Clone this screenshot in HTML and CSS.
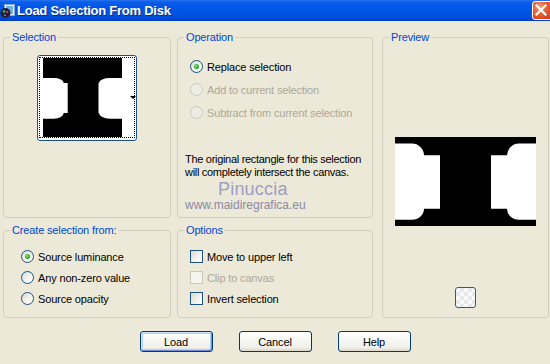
FILE: index.html
```html
<!DOCTYPE html>
<html>
<head>
<meta charset="utf-8">
<link rel="stylesheet" href="styles.css">
</head>
<body>
<div class="window">
  <div class="titlebar">
    <svg class="app-icon" width="16" height="16" viewBox="0 0 16 16">
      <rect x="4.5" y="1.5" width="10" height="11" fill="#E8F2FF" stroke="#8AA8D0"/>
      <rect x="6" y="3" width="7" height="8" fill="#6FB0E8"/>
      <circle cx="5.5" cy="10" r="5" fill="#2A1A30"/>
      <circle cx="4" cy="8.5" r="1.3" fill="#3CC060"/>
      <circle cx="7.2" cy="9" r="1.1" fill="#E04080"/>
      <circle cx="5" cy="12.2" r="1" fill="#4090E0"/>
    </svg>
    <span class="title">Load Selection From Disk</span>
    <span class="close">
      <svg width="21" height="19" viewBox="0 0 21 19"><path d="M5.5 4.5 L14.5 13.5 M14.5 4.5 L5.5 13.5" stroke="#fff" stroke-width="2.2" stroke-linecap="square"/></svg>
    </span>
  </div>

  <div class="client">
    <div class="groups">
      <div class="col col-left">
        <fieldset class="group g-selection">
          <legend>Selection</legend>
          <div class="thumb">
            <svg class="thumb-img" width="79" height="79" viewBox="0 0 79 79">
              <rect width="79" height="79" fill="#000"/>
              <path fill="#fff" d="M0 20 H10.7 A10 5 0 0 1 20.7 25 H24.7 V55 H20.7 A10 5.7 0 0 1 10.7 60.7 H0 Z"/>
              <path fill="#fff" d="M79 20 H67 A11 5 0 0 0 56 25 H55.5 V55 H56 A11 5.7 0 0 0 67 60.7 H79 Z"/>
            </svg>
            <span class="focus"></span>
            <span class="drop"></span>
          </div>
        </fieldset>
        <fieldset class="group g-create">
          <legend>Create selection from:</legend>
          <div class="body">
            <div class="opt"><span class="radio checked"></span>Source luminance</div>
            <div class="opt"><span class="radio"></span>Any non-zero value</div>
            <div class="opt"><span class="radio"></span>Source opacity</div>
          </div>
        </fieldset>
      </div>

      <div class="col col-mid">
        <fieldset class="group g-operation">
          <legend>Operation</legend>
          <div class="body">
            <div class="opt"><span class="radio checked"></span>Replace selection</div>
            <div class="opt disabled"><span class="radio"></span>Add to current selection</div>
            <div class="opt disabled"><span class="radio"></span>Subtract from current selection</div>
            <p class="note">The original rectangle for this selection<br>will completely intersect the canvas.</p>
            <div class="wm-name">Pinuccia</div>
            <div class="wm-url">www.maidiregrafica.eu</div>
          </div>
        </fieldset>
        <fieldset class="group g-options">
          <legend>Options</legend>
          <div class="body">
            <div class="opt"><span class="check"></span>Move to upper left</div>
            <div class="opt disabled"><span class="check"></span>Clip to canvas</div>
            <div class="opt"><span class="check"></span>Invert selection</div>
          </div>
        </fieldset>
      </div>

      <fieldset class="group g-preview">
        <legend>Preview</legend>
        <div class="body">
          <svg class="preview-img" width="141" height="89" viewBox="0 0 141 89">
            <rect width="141" height="89" fill="#000"/>
            <path fill="#fff" d="M0 6.6 H17 A12 12 0 0 1 29 18.3 H45 V71.7 H29 A12 11 0 0 1 17 82.7 H0 Z"/>
            <path fill="#fff" d="M141 6.6 H124 A12 12 0 0 0 112 18.3 H96 V71.7 H112 A12 11 0 0 0 124 82.7 H141 Z"/>
          </svg>
          <span class="mini-btn"></span>
        </div>
      </fieldset>
    </div>

    <div class="buttons">
      <button class="btn default">Load</button>
      <button class="btn">Cancel</button>
      <button class="btn">Help</button>
    </div>
  </div>
</div>
</body>
</html>
```

FILE: styles.css
```css
html, body {
  margin: 0;
  padding: 0;
  width: 550px;
  height: 364px;
  overflow: hidden;
  background: #ECE9D8;
}

.window {
  width: 550px;
  height: 364px;
  font-family: "Liberation Sans", Arial, sans-serif;
  font-size: 11px;
  letter-spacing: -0.15px;
  color: #000;
}

/* ---------- title bar ---------- */
.titlebar {
  height: 21px;
  display: flex;
  align-items: center;
  overflow: hidden;
  background: linear-gradient(to bottom,
    #2A72EE 0px, #0A5EEA 2px, #0057E7 6px, #0055E5 12px,
    #004FDD 17px, #0046D0 20px, #003CB6 21px);
}

.app-icon {
  flex: none;
  margin: 0 1px 0 0;
}

.title {
  flex: 1;
  color: #fff;
  font-weight: bold;
  font-size: 13px;
  letter-spacing: -0.25px;
  line-height: 21px;
  text-shadow: 1px 1px 0 #0B2B8C;
  white-space: nowrap;
}

.close {
  flex: none;
  width: 21px;
  height: 19px;
  margin-right: -3px;
  align-self: flex-start;
  margin-top: 1px;
  box-sizing: border-box;
  border: 1px solid #fff;
  border-radius: 3px;
  background: radial-gradient(circle at 35% 30%, #F4A186 0%, #E8663F 35%, #DA4A24 70%, #C0391A 100%);
  display: flex;
  align-items: center;
  justify-content: center;
}
.close svg { margin-left: -2px; margin-top: -1px; }

/* ---------- groups ---------- */
.groups {
  display: flex;
  padding: 10px 0 0 3px;
}

.col {
  display: flex;
  flex-direction: column;
  gap: 6px;
}
.col-left { width: 168px; }
.col-mid { width: 196px; margin-left: 6px; }

.group {
  margin: 0;
  padding: 0;
  min-width: 0;
  box-sizing: border-box;
  border: 1px solid #D0D0BF;
  border-radius: 4px;
}
.group legend {
  color: #0046D5;
  padding: 0 2px;
  margin-left: 6px;
  line-height: 12px;
  font-size: 11px;
}

.g-selection, .g-operation { height: 187px; }
.g-create, .g-options { height: 94px; }
.g-preview { width: 167px; height: 287px; margin-left: 9px; }

/* selection thumbnail */
.thumb {
  position: relative;
  width: 100px;
  height: 86px;
  box-sizing: border-box;
  margin: 12px auto 0;
  border: 1px solid #1C5180;
  border-radius: 3px;
  background: #fff;
  padding: 2px 0 0 5px;
}
.thumb-img { display: block; }
.focus {
  position: absolute;
  left: 1px; top: 1px; right: 1px; bottom: 2px;
  border: 1px dotted #000;
}
.drop {
  position: absolute;
  left: 92px;
  top: 40px;
  width: 0; height: 0;
  border-left: 3px solid transparent;
  border-right: 3px solid transparent;
  border-top: 3px solid #000;
}

/* option rows */
.opt {
  display: flex;
  align-items: center;
  height: 21px;
  white-space: nowrap;
}
.opt.disabled { color: #ACA899; }

.radio {
  flex: none;
  width: 13px;
  height: 13px;
  box-sizing: border-box;
  margin-right: 4px;
  border: 1px solid #1C5180;
  border-radius: 50%;
  background: linear-gradient(135deg, #DCD9CF 0%, #F4F3EE 55%, #FFFFFF 100%);
  display: flex;
  align-items: center;
  justify-content: center;
}
.radio.checked::after {
  content: "";
  width: 5px;
  height: 5px;
  border-radius: 50%;
  background: radial-gradient(circle at 40% 40%, #8EE48E 0%, #2CB42C 50%, #169216 100%);
}
.opt.disabled .radio {
  border-color: #CAC8BB;
  background: #EEEDE5;
}

.check {
  flex: none;
  width: 13px;
  height: 13px;
  box-sizing: border-box;
  margin-right: 4px;
  border: 1px solid #1C5180;
  background: linear-gradient(135deg, #DCD9CF 0%, #F2F1EC 55%, #FFFFFF 100%);
}
.opt.disabled .check {
  border-color: #CAC8BB;
  background: #F5F4EF;
}

.g-create .body { padding: 10px 0 0 17px; }
.g-options .body { padding: 10px 0 0 12px; }

.g-operation .body { padding: 12px 0 0 7px; }
.g-operation .opt { height: 23px; margin-left: 5px; }

.note {
  margin: 29px 0 0 0;
  line-height: 13px;
  white-space: nowrap;
  letter-spacing: -0.3px;
}

.wm-name {
  margin: 0 0 0 33px;
  font-size: 18px;
  line-height: 20px;
  color: #9C9EC6;
  letter-spacing: 0.2px;
}
.wm-url {
  font-size: 12px;
  line-height: 13px;
  letter-spacing: 0;
  color: #8A8AA6;
}

/* preview */
.g-preview .body {
  display: flex;
  flex-direction: column;
  align-items: center;
}
.preview-img {
  display: block;
  margin-top: 94px;
}
.mini-btn {
  display: block;
  width: 21px;
  height: 21px;
  box-sizing: border-box;
  margin-top: 61px;
  border: 1px solid #2C5A8B;
  border-radius: 3px;
  background-color: #F6F6F6;
  background-image: conic-gradient(#E8E8E8 25%, #F8F8F8 0 50%, #E8E8E8 0 75%, #F8F8F8 0);
  background-size: 8px 8px;
}

/* buttons */
.buttons {
  display: flex;
  justify-content: center;
  gap: 26px;
  margin-top: 13px;
}
.btn {
  width: 73px;
  height: 21px;
  box-sizing: border-box;
  padding: 0;
  border: 1px solid #003C74;
  border-radius: 3px;
  background: linear-gradient(to bottom, #FFFFFF 0%, #F7F7F4 40%, #F0F0EA 80%, #E3DED3 95%, #D6D0C5 100%);
  font-family: "Liberation Sans", Arial, sans-serif;
  font-size: 11px;
  letter-spacing: -0.15px;
  color: #000;
}
.btn.default {
  box-shadow: inset 1px 1px 0 #CEE3FF, inset -1px -1px 0 #6E8FE0, inset 0 0 0 2px #B4CDF5;
}
```
